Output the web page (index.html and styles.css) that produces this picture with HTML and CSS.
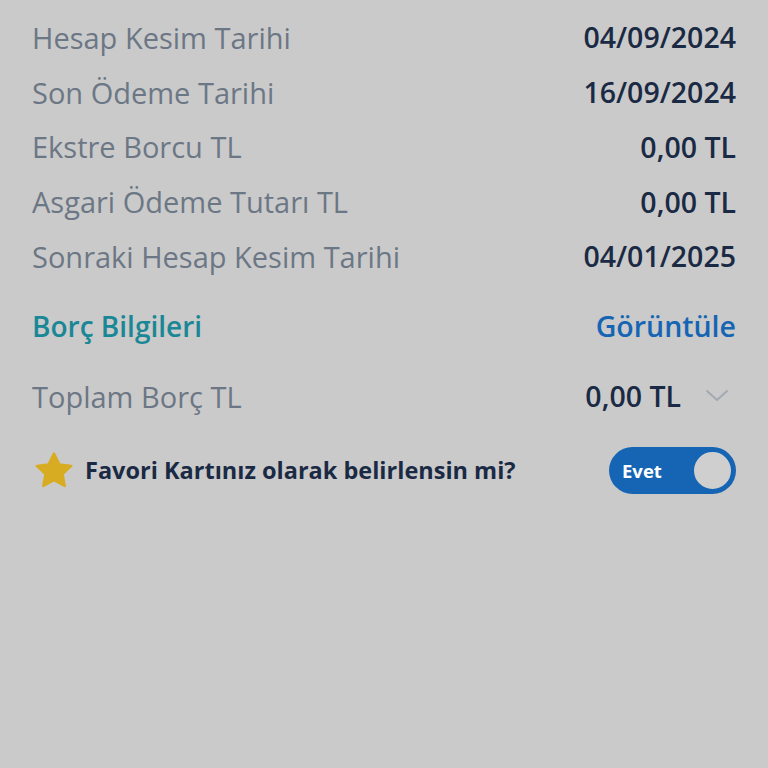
FILE: index.html
```html
<!DOCTYPE html>
<html lang="tr">
  <head>
    <meta charset="UTF-8" />
    <meta name="viewport" content="width=device-width, initial-scale=1.0" />
    <title>Kart Detayı</title>
    <link rel="stylesheet" href="styles.css">
  </head>
  <body>
    <div class="container">
      <div class="info-list">
        <div class="info-row">
          <span class="label">Hesap Kesim Tarihi</span>
          <span class="value">04/09/2024</span>
        </div>
        <div class="info-row">
          <span class="label">Son Ödeme Tarihi</span>
          <span class="value">16/09/2024</span>
        </div>
        <div class="info-row">
          <span class="label">Ekstre Borcu TL</span>
          <span class="value">0,00 TL</span>
        </div>
        <div class="info-row">
          <span class="label">Asgari Ödeme Tutarı TL</span>
          <span class="value">0,00 TL</span>
        </div>
        <div class="info-row">
          <span class="label">Sonraki Hesap Kesim Tarihi</span>
          <span class="value">04/01/2025</span>
        </div>
      </div>

      <div class="section-head">
        <span class="section-title">Borç Bilgileri</span>
        <a class="section-link" href="#">Görüntüle</a>
      </div>

      <div class="info-row total-row">
        <span class="label">Toplam Borç TL</span>
        <span class="total-value">
          <span class="value">0,00 TL</span>
          <svg class="chevron" width="24" height="14" viewBox="0 0 24 14">
            <path d="M2 2 L12 11 L22 2" fill="none" stroke="#a3a9b1" stroke-width="2" stroke-linecap="round" stroke-linejoin="round" />
          </svg>
        </span>
      </div>

      <div class="favorite-row">
        <div class="favorite-text">
          <svg class="star" width="40" height="38" viewBox="0 0 40 38">
            <path d="M20 2.5 L25.3 13.4 L37.2 14.9 L28.5 23.1 L30.7 35 L20 29.2 L9.3 35 L11.5 23.1 L2.8 14.9 L14.7 13.4 Z" fill="#d8ac22" stroke="#d8ac22" stroke-width="2.5" stroke-linejoin="round" />
          </svg>
          <span>Favori Kartınız olarak belirlensin mi?</span>
        </div>
        <div class="toggle">
          <span class="toggle-label">Evet</span>
          <span class="toggle-knob"></span>
        </div>
      </div>
    </div>
  </body>
</html>
```

FILE: styles.css
```css
body {
  font-family: "Open Sans", "Noto Sans", sans-serif;
  background-color: #cacaca;
  margin: 0;
  padding: 0;
}
.container {
  padding: 10px 32px 0 32px;
}
.info-row {
  display: flex;
  justify-content: space-between;
  align-items: center;
  height: 54.75px;
}
.label {
  font-size: 29px;
  color: #6c7785;
}
.value {
  font-size: 28.5px;
  font-weight: 600;
  color: #1b2a44;
}
.section-head {
  display: flex;
  justify-content: space-between;
  align-items: center;
  height: 44px;
  margin-top: 20px;
}
.section-title {
  font-size: 28px;
  font-weight: 600;
  color: #1a8796;
}
.section-link {
  font-size: 28.5px;
  font-weight: 600;
  color: #1565b4;
  text-decoration: none;
}
.total-row {
  margin-top: 21px;
}
.total-value {
  display: flex;
  align-items: center;
  gap: 24px;
}
.chevron {
  margin-right: 7px;
}
.favorite-row {
  display: flex;
  justify-content: space-between;
  align-items: center;
  margin-top: 23px;
}
.favorite-text {
  display: flex;
  align-items: center;
  gap: 11px;
  padding-left: 2px;
  font-size: 23.5px;
  font-weight: 700;
  color: #1b2a44;
}
.toggle {
  display: flex;
  justify-content: space-between;
  align-items: center;
  width: 127px;
  height: 47px;
  box-sizing: border-box;
  padding: 0 3px 0 13px;
  background-color: #1565b4;
  border-radius: 24px;
}
.toggle-label {
  font-size: 18.5px;
  font-weight: 700;
  color: #fff;
}
.toggle-knob {
  width: 41px;
  height: 41px;
  box-sizing: border-box;
  border-radius: 50%;
  background-color: #cfcfcf;
  border: 2px solid #1565b4;
}
```
